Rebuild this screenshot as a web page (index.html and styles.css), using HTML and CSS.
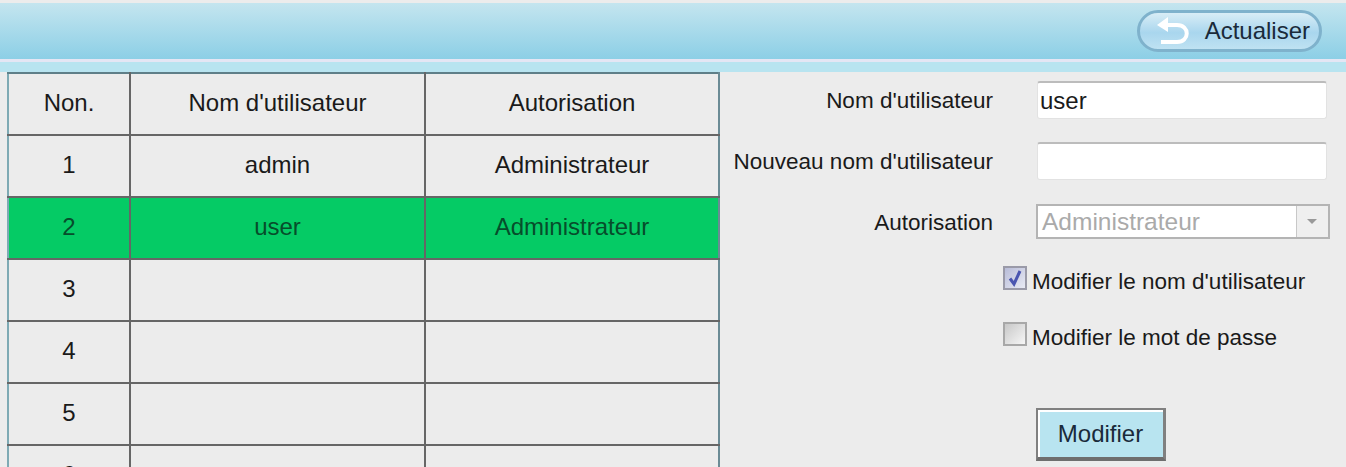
FILE: index.html
```html
<!DOCTYPE html>
<html lang="fr">
<head>
    <meta charset="UTF-8">
    <title>Utilisateurs</title>
    <link rel="stylesheet" href="styles.css">
</head>
<body>

    <!-- Top bar -->
    <div class="top-bar">
        <button class="refresh-btn">
            <svg class="refresh-icon" width="36" height="30" viewBox="0 0 36 30">
                <path d="M6 9H22C35 9 35 26 22 26H6" fill="none" stroke="#fff" stroke-width="4"/>
                <path d="M13 1L2 9L13 16Z" fill="#fff"/>
            </svg>
            <span>Actualiser</span>
        </button>
    </div>
    <div class="top-band"></div>

    <div class="main">
        <!-- User table -->
        <div class="table-wrap">
            <table class="user-table">
                <tr><th class="col-num">Non.</th><th class="col-name">Nom d'utilisateur</th><th>Autorisation</th></tr>
                <tr><td>1</td><td>admin</td><td>Administrateur</td></tr>
                <tr class="selected"><td>2</td><td>user</td><td>Administrateur</td></tr>
                <tr><td>3</td><td></td><td></td></tr>
                <tr><td>4</td><td></td><td></td></tr>
                <tr><td>5</td><td></td><td></td></tr>
                <tr><td>6</td><td></td><td></td></tr>
            </table>
        </div>

        <!-- Edit form -->
        <div class="edit-form">
            <div class="form-row">
                <label class="form-label">Nom d'utilisateur</label>
                <input class="text-input" type="text" value="user">
            </div>
            <div class="form-row second-row">
                <label class="form-label">Nouveau nom d'utilisateur</label>
                <input class="text-input" type="text">
            </div>
            <div class="form-row select-row">
                <label class="form-label">Autorisation</label>
                <div class="fake-select">
                    <span class="select-value">Administrateur</span>
                    <span class="select-arrow"></span>
                </div>
            </div>
            <div class="check-row first-check">
                <span class="check-box checked">
                    <svg width="16" height="18" viewBox="0 0 16 18">
                        <path d="M3 9.5L7 15L13 2" fill="none" stroke="#4a55b0" stroke-width="3"/>
                    </svg>
                </span>
                <span class="check-text">Modifier le nom d'utilisateur</span>
            </div>
            <div class="check-row second-check">
                <span class="check-box"></span>
                <span class="check-text">Modifier le mot de passe</span>
            </div>
            <button class="modify-btn">Modifier</button>
        </div>
    </div>

</body>
</html>
```

FILE: styles.css
```css
html, body {
    height: 467px;
    overflow: hidden;
}
body {
    margin: 0;
    background-color: #ececec;
    font-family: "Liberation Sans", Arial, sans-serif;
    font-size: 22.5px;
    color: #1a1a1a;
}
.top-bar {
    height: 56px;
    margin-top: 3px;
    border-bottom: 3px solid #e4e6f4;
    background: linear-gradient(to bottom, #c4e5ef, #8ccfe6);
    display: flex;
    align-items: center;
    justify-content: flex-end;
    padding-right: 24px;
}
.refresh-btn {
    width: 185px;
    height: 42px;
    padding: 0 9px 0 15px;
    border: 3px solid #7fb2cc;
    border-radius: 21px;
    background: linear-gradient(to bottom, #d8edf6, #a9d6ee 55%, #bfe2f2);
    display: flex;
    align-items: center;
    justify-content: space-between;
    font-family: inherit;
    font-size: 24px;
    color: #1a2a3a;
}
.refresh-icon {
    flex: none;
}
.top-band {
    height: 10px;
    background-color: #b8e4f0;
}
.main {
    display: flex;
}
.table-wrap {
    width: 713px;
    height: 395px;
    margin-left: 7px;
    overflow: hidden;
    flex: none;
}
.user-table {
    width: 713px;
    table-layout: fixed;
    border-collapse: collapse;
    font-size: 24px;
}
.user-table th,
.user-table td {
    height: 58px;
    padding: 0 0 2px;
    border: 2px solid #666;
    font-weight: normal;
    text-align: center;
}
.user-table tr:first-child th {
    border-top-color: #5f7f88;
}
.user-table tr > :first-child {
    border-left-color: #7eaab4;
}
.user-table tr > :last-child {
    border-right-color: #6b8b95;
}
.col-num {
    width: 120px;
}
.col-name {
    width: 293px;
}
.selected td {
    background-color: #05cb65;
    color: #074d2b;
}
.edit-form {
    flex: 1;
    display: flex;
    flex-direction: column;
    align-items: flex-start;
    padding-top: 9px;
}
.form-row {
    display: flex;
    align-items: center;
    height: 38px;
    margin-bottom: 23px;
}
.second-row {
    margin-bottom: 24px;
}
.form-label {
    width: 273px;
    flex: none;
    padding-top: 2px;
    text-align: right;
    white-space: nowrap;
}
.text-input {
    width: 290px;
    height: 38px;
    margin-left: 44px;
    box-sizing: border-box;
    border: 1px solid #e2e2e2;
    border-top: 2px solid #bcbcbc;
    border-radius: 3px;
    background-color: #fff;
    padding: 0 2px;
    font-family: inherit;
    font-size: 24px;
    color: #1a1a1a;
}
.select-row {
    height: 35px;
    margin-bottom: 0;
}
.fake-select {
    width: 294px;
    height: 35px;
    margin-left: 43px;
    box-sizing: border-box;
    border: 2px solid #b4b4b4;
    background-color: #fff;
    display: flex;
    align-items: center;
    justify-content: space-between;
    font-size: 24.5px;
}
.select-value {
    padding-left: 4px;
    color: #aaa;
}
.select-arrow {
    width: 32px;
    height: 100%;
    box-sizing: border-box;
    background-color: #efefef;
    border-left: 1px solid #c8c8c8;
    position: relative;
}
.select-arrow::after {
    content: "";
    position: absolute;
    left: 10px;
    top: 13px;
    border-left: 5px solid transparent;
    border-right: 5px solid transparent;
    border-top: 5px solid #999;
}
.check-row {
    display: flex;
    align-items: flex-start;
    gap: 5px;
    margin-left: 283px;
    height: 24px;
    white-space: nowrap;
}
.first-check {
    margin-top: 27px;
}
.second-check {
    margin-top: 32px;
}
.check-box {
    width: 24px;
    height: 24px;
    flex: none;
    box-sizing: border-box;
    border: 2px solid #a8a8a8;
    background: linear-gradient(135deg, #c8c8c8, #f6f6f6);
    display: flex;
    align-items: center;
    justify-content: center;
}
.check-box.checked {
    border-color: #9a9aa8;
    background: linear-gradient(135deg, #b8bcd8, #e8eaf4);
}
.check-box svg {
    display: block;
}
.check-text {
    line-height: 24px;
    margin-top: 4px;
}
.modify-btn {
    width: 130px;
    height: 53px;
    margin-top: 62px;
    margin-left: 316px;
    box-sizing: border-box;
    border: 2px solid #808080;
    border-bottom: 4px solid #6e6e6e;
    border-right-width: 3px;
    box-shadow: inset 2px 2px 0 #fff;
    background-color: #b8e4f0;
    font-family: inherit;
    font-size: 24px;
    color: #1a2a3a;
}
```
